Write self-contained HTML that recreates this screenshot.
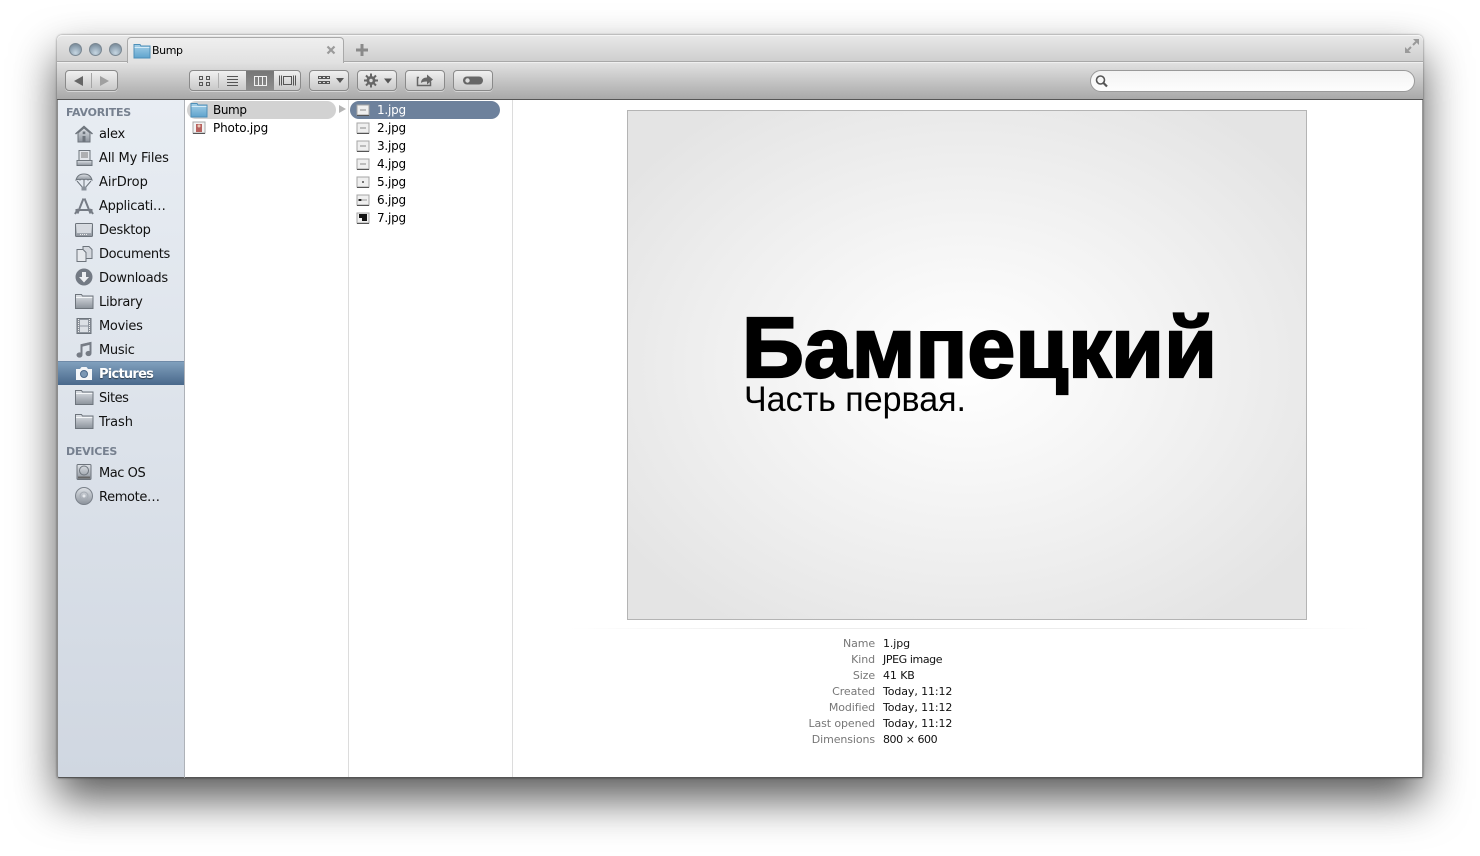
<!DOCTYPE html>
<html><head><meta charset="utf-8"><title>Bump</title>
<style>
html,body{margin:0;padding:0;width:1480px;height:856px;overflow:hidden;background:#fff}
body{position:relative;font-family:"DejaVu Sans","Liberation Sans",sans-serif;color:#000}
div,svg,span{position:absolute}
.win{left:57px;top:35px;width:1366px;height:743px;border-radius:5px 5px 2px 2px;box-shadow:0 21px 44px rgba(0,0,0,.66),0 0 2px rgba(0,0,0,.5)}
.title{left:0;top:0;width:1366px;height:27px;background:linear-gradient(#e9e9e9,#cfcfcf);border-radius:5px 5px 0 0;border-bottom:1px solid #a8a8a8;box-sizing:border-box;box-shadow:inset 0 1px 0 #f6f6f6}
.tool{left:0;top:27px;width:1366px;height:38px;background:linear-gradient(#e2e2e2,#a9a9a9);border-bottom:1px solid #555;box-sizing:border-box;box-shadow:inset 0 1px 0 #efefef}
.tab{left:70px;top:2px;width:217px;height:26px;background:linear-gradient(#efefef,#e1e1e1);border:1px solid #a9a9a9;border-bottom:none;border-radius:4px 4px 0 0;box-sizing:border-box}
.light{width:13px;height:13px;border-radius:50%;top:8px;background:radial-gradient(circle at 50% 80%,#c6d6e2,#8fa2b1 60%,#6d7d8b);border:1px solid #7a8792;box-sizing:border-box}
.btn{top:35px;height:21px;box-sizing:border-box;border:1px solid #8a8a8a;border-radius:4px;background:linear-gradient(#f0f0f0,#c9c9c9);box-shadow:0 1px 0 rgba(255,255,255,.45)}
.side{left:0;top:65px;width:128px;height:678px;background:linear-gradient(#e8edf3,#d0d7e1);border-right:1px solid #aeb2b8;box-sizing:border-box;border-left:1px solid #8d8d8d;border-bottom:1px solid #555;border-radius:0 0 0 2px}
.main{left:128px;top:65px;width:1238px;height:678px;background:#fff;border-bottom:1px solid #555;border-right:1px solid #999;box-sizing:border-box}
.hd{font-size:11px;font-weight:bold;color:#76808f;left:8px;letter-spacing:-.25px;white-space:nowrap;font-family:"DejaVu Sans",sans-serif}
.it{left:41px;font-size:13px;line-height:16px;white-space:nowrap;letter-spacing:-.28px;color:#111}
.ic{left:16px;width:20px;height:20px}
.r{font-size:12px;line-height:15px;white-space:nowrap;letter-spacing:-.22px}
.lb,.vl{font-size:11px;line-height:14px;white-space:nowrap;letter-spacing:-.1px}
.lb{color:#777;right:547px;text-align:right}
.vl{left:698px;color:#111}
.fi{width:14px;height:14px}
</style></head><body>
<svg width="0" height="0" style="left:0;top:0">
<defs>
<linearGradient id="fb" x1="0" y1="0" x2="0" y2="1"><stop offset="0" stop-color="#a6d0e8"/><stop offset="1" stop-color="#5fa3cd"/></linearGradient>
<linearGradient id="gf" x1="0" y1="0" x2="0" y2="1"><stop offset="0" stop-color="#dfe3e8"/><stop offset="1" stop-color="#8b929b"/></linearGradient>
<symbol id="folder" viewBox="0 0 20 20"><path d="M1.500 3.500h6l1 1.500h10.500v12.500h-17.500z" fill="url(#gf)" stroke="#6d747c"/><path d="M2 6.500h16.500" stroke="#f4f6f8"/></symbol>
<symbol id="blue" viewBox="0 0 18 16"><path d="M1 1.500h6l1 1.500h9v12H1z" fill="url(#fb)" stroke="#4d8fb8"/><path d="M1.500 4.500h15" stroke="#d5ebf7"/></symbol>
<symbol id="jpg" viewBox="0 0 14 14"><path d="M1 2h12v10H1z" fill="#efefef" stroke="#a5a5a5"/><path d="M1 12.500h12" stroke="#555"/><path d="M4 7h6" stroke="#888"/></symbol>
</defs></svg>

<div class="win">
 <div class="title"></div>
 <div class="tool"></div>
 <div class="light" style="left:12px"></div>
 <div class="light" style="left:32px"></div>
 <div class="light" style="left:52px"></div>
 <div class="tab"></div>
 <svg style="left:76px;top:8px" width="18" height="16"><use href="#blue"/></svg>
 <div style="left:95px;top:9px;font-size:11px;line-height:14px;letter-spacing:-.4px">Bump</div>
 <svg style="left:269px;top:10px" width="10" height="10"><path d="M1.500 1.500l7 7M8.500 1.500l-7 7" stroke="#9b9b9b" stroke-width="2.200"/></svg>
 <svg style="left:298px;top:8px" width="14" height="14"><path d="M7 1v12M1 7h12" stroke="#8a8a8a" stroke-width="3"/></svg>
 <svg style="left:1347px;top:3px" width="16" height="16"><path d="M1 15V9l6 6zM15 1v6L9 1z" fill="#9a9a9a"/><path d="M4 12l3-3M12 4L9 7" stroke="#9a9a9a" stroke-width="2"/></svg>

 <div class="btn" style="left:8px;width:53px"></div>
 <div style="left:34px;top:38px;width:1px;height:15px;background:#a5a5a5"></div>
 <svg style="left:16px;top:40px" width="40" height="12"><path d="M1 6l9-5v10z" fill="#666"/><path d="M27 1l9 5-9 5z" fill="#a0a0a0"/></svg>

 <div class="btn" style="left:132px;width:112px"></div>
 <div style="left:189px;top:36px;width:28px;height:19px;background:linear-gradient(#767676,#8e8e8e)"></div>
 <svg style="left:132px;top:35px" width="112" height="21" fill="none" stroke="#555">
  <path d="M10.500 6.500h3v3h-3zM17.500 6.500h3v3h-3zM10.500 12.500h3v3h-3zM17.500 12.500h3v3h-3z"/>
  <path d="M29.500 3v15" stroke="#b0b0b0"/>
  <path d="M38 6.500h11M38 9.500h11M38 12.500h11M38 15.500h11"/>
  <path d="M65.500 6.500h12v9h-12zM69.500 6.500v9M73.500 6.500v9" stroke="#f2f2f2"/>
  <path d="M90.500 5.500v10M92.500 5.500v10M106.500 5.500v10M104.500 5.500v10M94.500 6.500h8v8h-8z"/>
 </svg>

 <div class="btn" style="left:252px;width:40px"></div>
 <svg style="left:252px;top:35px" width="40" height="21"><path d="M9.500 6.500h3v2h-3zM13.500 6.500h3v2h-3zM17.500 6.500h3v2h-3zM9.500 11.500h3v2h-3zM13.500 11.500h3v2h-3zM17.500 11.500h3v2h-3z" fill="none" stroke="#555"/><path d="M27 8h8l-4 5z" fill="#555"/></svg>

 <div class="btn" style="left:300px;width:40px"></div>
 <svg style="left:300px;top:35px" width="40" height="21"><g stroke="#666" stroke-width="2"><path d="M14 3.500v14M7 10.500h14M9 5.500l10 10M19 5.500l-10 10"/></g><circle cx="14" cy="10.500" r="4.500" fill="#666"/><circle cx="14" cy="10.500" r="1.700" fill="#ddd"/><path d="M27 8.500h8l-4 5z" fill="#555"/></svg>

 <div class="btn" style="left:348px;width:40px"></div>
 <svg style="left:348px;top:34px" width="40" height="21"><path d="M14 8.500h-1.500v8h13v-4" fill="none" stroke="#666" stroke-width="1.500"/><path d="M16 14c0-4 3-5.500 6-5.500V5.500l6 5-6 5v-3c-3 0-5 .5-6 1.500z" fill="#666"/></svg>

 <div class="btn" style="left:396px;width:40px"></div>
 <svg style="left:396px;top:35px" width="40" height="21"><rect x="10" y="6.500" width="20" height="8" rx="4" fill="#666"/><circle cx="14.500" cy="10.500" r="2.200" fill="#ddd"/></svg>

 <div style="left:1033px;top:35px;width:325px;height:22px;box-sizing:border-box;border:1px solid #9a9a9a;border-radius:11px;background:linear-gradient(#f3f3f3,#fdfdfd)"></div>
 <svg style="left:1037px;top:39px" width="16" height="15"><circle cx="6.500" cy="6" r="4" fill="none" stroke="#555" stroke-width="1.600"/><path d="M9.500 9l3.500 3.500" stroke="#555" stroke-width="2.200"/></svg>

 <div class="side">
  <div class="hd" style="top:6px">FAVORITES</div>
  <svg class="ic" style="top:24px" viewBox="0 0 20 20"><path d="M4 9v9h12V9l-6-5z" fill="url(#gf)" stroke="#6d747c"/><path d="M1.500 10L10 2.500 18.500 10" fill="none" stroke="#6d747c" stroke-width="1.500"/><rect x="8.500" y="12" width="3" height="6" fill="#6d747c"/><rect x="8.700" y="7.500" width="2.600" height="2.600" fill="#6d747c"/></svg>
  <div class="it" style="top:27px">alex</div>
  <svg class="ic" style="top:48px" viewBox="0 0 20 20"><path d="M5 2.500h11v10H5z" fill="#e4e7eb" stroke="#6d747c"/><path d="M7 5h7M7 7h7M7 9h7" stroke="#777"/><path d="M3 12.500h15v5H3z" fill="url(#gf)" stroke="#6d747c"/></svg>
  <div class="it" style="top:51px;letter-spacing:-.18px">All My Files</div>
  <svg class="ic" style="top:72px" viewBox="0 0 20 20"><path d="M2 8C3 4 6 2 10 2s7 2 8 6c-2-1-3-1-4 0-1-1-3-1-4 0-1-1-3-1-4 0-1-1-2-1-4 0z" fill="url(#gf)" stroke="#6d747c"/><path d="M3 9l6 7M17 9l-6 7M10 8v8" stroke="#6d747c"/><rect x="7.500" y="14.500" width="5" height="4" fill="#8b929b"/></svg>
  <div class="it" style="top:75px;letter-spacing:-.05px">AirDrop</div>
  <svg class="ic" style="top:96px" viewBox="0 0 20 20"><path d="M10.500 2.500l6 15M9.500 2.500l-6 15M1.500 14h17" fill="none" stroke="#767c85" stroke-width="2"/><path d="M1 18l3-5M19 18l-3-5" stroke="#767c85" stroke-width="2"/></svg>
  <div class="it" style="top:99px">Applicati…</div>
  <svg class="ic" style="top:120px" viewBox="0 0 20 20"><rect x="1.500" y="3.500" width="17" height="13" rx="1" fill="url(#gf)" stroke="#6d747c"/><rect x="3" y="5" width="14" height="8" fill="#d6dae0"/><path d="M6 14.500h8" stroke="#eee" stroke-dasharray="1 1"/></svg>
  <div class="it" style="top:123px">Desktop</div>
  <svg class="ic" style="top:144px" viewBox="0 0 20 20"><path d="M9 2.500h6l3 3v9H9z" fill="#d4d8de" stroke="#6d747c"/><path d="M3 5.500h6l3 3v9H3z" fill="#e6e9ed" stroke="#6d747c"/></svg>
  <div class="it" style="top:147px;letter-spacing:-.35px">Documents</div>
  <svg class="ic" style="top:167px" viewBox="0 0 20 20"><circle cx="10" cy="10" r="8.500" fill="#737a84"/><path d="M8 5h4v5h3l-5 5.500L5 10h3z" fill="#eef0f3"/></svg>
  <div class="it" style="top:171px">Downloads</div>
  <svg class="ic" style="top:191px"><use href="#folder"/></svg>
  <div class="it" style="top:195px">Library</div>
  <svg class="ic" style="top:216px" viewBox="0 0 20 20"><rect x="3" y="2.500" width="14" height="15" fill="#8e959e" stroke="#6d747c"/><rect x="6" y="4" width="8" height="5.500" fill="#dce0e5"/><rect x="6" y="10.500" width="8" height="5.500" fill="#dce0e5"/><path d="M4.500 3v14M15.500 3v14" stroke="#eee" stroke-dasharray="1 1"/></svg>
  <div class="it" style="top:219px">Movies</div>
  <svg class="ic" style="top:240px" viewBox="0 0 20 20"><path d="M7.500 14.500V5L16.500 3v10" fill="none" stroke="#767c85" stroke-width="2"/><path d="M7 4.500l10-2.500v2.500L7 7z" fill="#767c85"/><ellipse cx="5.500" cy="15" rx="3" ry="2.600" fill="#767c85"/><ellipse cx="14.500" cy="13.500" rx="3" ry="2.600" fill="#767c85"/></svg>
  <div class="it" style="top:243px">Music</div>
  <div style="left:0;top:261px;width:126px;height:24px;background:linear-gradient(#80a0bd,#49688b);border-top:1px solid #6e8aa8;box-sizing:border-box"></div>
  <svg class="ic" style="top:263px" viewBox="0 0 20 20"><path d="M2 6h4l1.500-2h5L14 6h4v11H2z" fill="#f4f6f8"/><circle cx="10" cy="11" r="3.500" fill="#7a97b4" stroke="#4a688a"/></svg>
  <div class="it" style="top:267px;color:#fff;font-weight:bold;text-shadow:0 1px 1px rgba(0,0,0,.5);letter-spacing:-.75px">Pictures</div>
  <svg class="ic" style="top:287px"><use href="#folder"/></svg>
  <div class="it" style="top:291px;letter-spacing:-.45px">Sites</div>
  <svg class="ic" style="top:311px"><use href="#folder"/></svg>
  <div class="it" style="top:315px;letter-spacing:-.1px">Trash</div>
  <div class="hd" style="top:345px">DEVICES</div>
  <svg class="ic" style="top:362px" viewBox="0 0 20 20"><rect x="3" y="2.500" width="14" height="15" rx="1" fill="url(#gf)" stroke="#6d747c"/><circle cx="10" cy="8.500" r="4.500" fill="none" stroke="#6d747c"/><rect x="4" y="14.500" width="12" height="2" fill="#666"/></svg>
  <div class="it" style="top:366px;letter-spacing:-.45px">Mac OS</div>
  <svg class="ic" style="top:386px" viewBox="0 0 20 20"><circle cx="10" cy="10" r="8.500" fill="url(#gf)" stroke="#7a818a"/><circle cx="10" cy="10" r="4" fill="none" stroke="#a4aab2"/><circle cx="10" cy="10" r="1.500" fill="#e6e9ed"/></svg>
  <div class="it" style="top:390px;letter-spacing:-.35px">Remote…</div>
 </div>

 <div class="main">
  <div style="left:163px;top:0;width:1px;height:677px;background:#dcdcdc"></div>
  <div style="left:327px;top:0;width:1px;height:677px;background:#dcdcdc"></div>

  <div style="left:2px;top:1px;width:149px;height:18px;border-radius:9px;background:#d2d2d2"></div>
  <svg style="left:5px;top:2px" width="18" height="16"><use href="#blue"/></svg>
  <div class="r" style="left:28px;top:3px;letter-spacing:-.4px">Bump</div>
  <svg style="left:154px;top:5px" width="7" height="8"><path d="M0 0l7 4-7 4z" fill="#b5b5b5"/></svg>
  <svg style="left:7px;top:21px" width="14" height="14" viewBox="0 0 14 14"><path d="M1 1h12v11H1z" fill="#f3f3f3" stroke="#aaa"/><path d="M1 12.500h12" stroke="#555"/><rect x="4" y="3" width="6" height="8" fill="#b8625f"/><circle cx="7" cy="5" r="1.500" fill="#e8c9b8"/></svg>
  <div class="r" style="left:28px;top:21px;letter-spacing:-.15px">Photo.jpg</div>

  <div style="left:165px;top:1px;width:150px;height:18px;border-radius:9px;background:#6d819c"></div>
  <svg class="fi" style="left:171px;top:3px"><use href="#jpg"/></svg>
  <div class="r" style="left:192px;top:3px;color:#fff">1.jpg</div>
  <svg class="fi" style="left:171px;top:21px"><use href="#jpg"/></svg>
  <div class="r" style="left:192px;top:21px">2.jpg</div>
  <svg class="fi" style="left:171px;top:39px"><use href="#jpg"/></svg>
  <div class="r" style="left:192px;top:39px">3.jpg</div>
  <svg class="fi" style="left:171px;top:57px"><use href="#jpg"/></svg>
  <div class="r" style="left:192px;top:57px">4.jpg</div>
  <svg class="fi" style="left:171px;top:75px" viewBox="0 0 14 14"><path d="M1 2h12v10H1z" fill="#efefef" stroke="#a5a5a5"/><path d="M1 12.500h12" stroke="#555"/><rect x="6" y="6" width="2" height="2" fill="#777"/></svg>
  <div class="r" style="left:192px;top:75px">5.jpg</div>
  <svg class="fi" style="left:171px;top:93px" viewBox="0 0 14 14"><path d="M1 2h12v10H1z" fill="#efefef" stroke="#a5a5a5"/><path d="M1 12.500h12" stroke="#555"/><path d="M2.500 7h3" stroke="#222" stroke-width="2"/><path d="M6 7h5" stroke="#999"/></svg>
  <div class="r" style="left:192px;top:93px">6.jpg</div>
  <svg class="fi" style="left:171px;top:111px" viewBox="0 0 14 14"><path d="M1 2h12v10H1z" fill="#efefef" stroke="#a5a5a5"/><path d="M1 12.500h12" stroke="#555"/><path d="M3 3h8v7H6V7H3z" fill="#111"/></svg>
  <div class="r" style="left:192px;top:111px">7.jpg</div>

  <div style="left:442px;top:10px;width:680px;height:510px;box-sizing:border-box;border:1px solid #b4b4b4;background:radial-gradient(ellipse 62% 62% at 50% 50%,#fff 0%,#f9f9f9 25%,#eeeeee 65%,#e4e4e4 100%)"></div>
  <svg style="left:442px;top:10px" width="680" height="510">
   <text x="115" y="267" font-family="Liberation Sans" font-weight="bold" font-size="85" textLength="475" lengthAdjust="spacingAndGlyphs" stroke="#000" stroke-width="2.200">Бампецкий</text>
   <text x="117" y="301" font-family="Liberation Sans" font-size="35" textLength="222" lengthAdjust="spacingAndGlyphs">Часть первая.</text>
  </svg>

  <div style="left:385px;top:528px;width:800px;height:1px;background:linear-gradient(90deg,#fff,#ececec 25%,#ececec 75%,#fff)"></div>

  <div class="lb" style="top:537px">Name</div><div class="vl" style="top:537px">1.jpg</div>
  <div class="lb" style="top:553px">Kind</div><div class="vl" style="top:553px;letter-spacing:-.4px">JPEG image</div>
  <div class="lb" style="top:569px">Size</div><div class="vl" style="top:569px">41 KB</div>
  <div class="lb" style="top:585px">Created</div><div class="vl" style="top:585px">Today, 11:12</div>
  <div class="lb" style="top:601px">Modified</div><div class="vl" style="top:601px">Today, 11:12</div>
  <div class="lb" style="top:617px">Last opened</div><div class="vl" style="top:617px">Today, 11:12</div>
  <div class="lb" style="top:633px">Dimensions</div><div class="vl" style="top:633px;letter-spacing:-.45px">800 × 600</div>
 </div>
</div>
</body></html>
